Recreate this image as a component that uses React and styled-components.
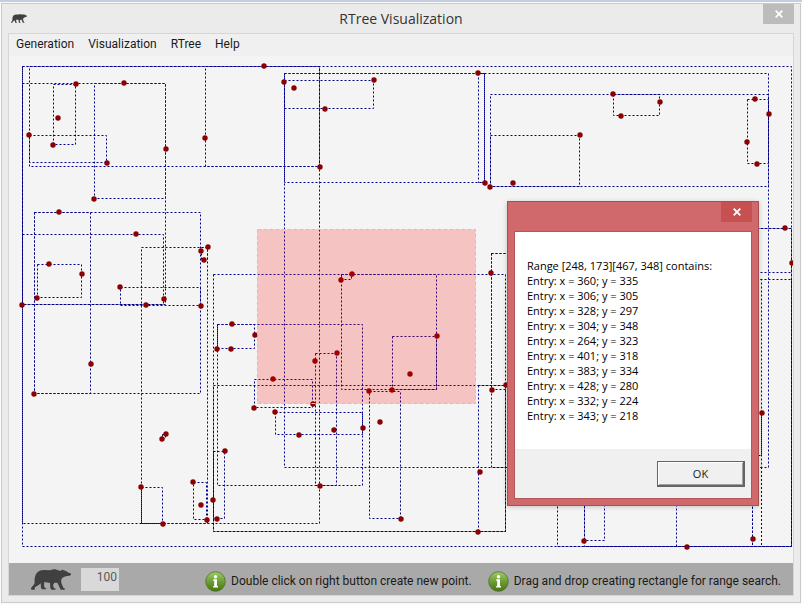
import React from 'react';
import styled, { createGlobalStyle } from 'styled-components';

const GlobalStyle = createGlobalStyle`
  *, *::before, *::after { box-sizing: border-box; }
  body {
    margin: 0;
    background: #f0f1f3;
    font-family: "Open Sans", "Noto Sans", sans-serif;
    font-size: 12px;
    color: #1a1a1a;
  }
  button, input { font: inherit; color: inherit; }
`;

const Desktop = styled.div`
  position: relative;
  padding: 1px 1px 2px;
  border-top: 2px solid #c5cde0;
  background: #fbfbfb;
`;

const Window = styled.section`
  display: flex;
  flex-direction: column;
  padding: 0 6px 6px;
  border: 1px solid #cacaca;
  background: #ebebeb;
`;

const TitleBar = styled.header`
  display: grid;
  grid-template-columns: 1fr auto 1fr;
  height: 29px;
  align-items: center;
`;

const TitleIcon = styled.span`
  display: flex;
  padding-left: 3px;
`;

const Title = styled.h1`
  margin: 0;
  font-size: 14px;
  font-weight: 400;
  line-height: 20px;
  color: #333;
`;

const CloseButton = styled.button`
  display: flex;
  align-items: center;
  justify-content: center;
  align-self: start;
  justify-self: end;
  width: 31px;
  height: 20px;
  padding: 0;
  border: 0;
  background: ${(p) => (p.$active ? '#c75050' : '#bcbcbc')};
`;

const Client = styled.main`
  border: 1px solid #d6d6d6;
  background: #f4f4f4;
`;

const MenuBar = styled.nav`
  display: flex;
  align-items: flex-start;
  gap: 14px;
  height: 22px;
  padding: 0 7px;
  background: #f0f0f0;
`;

const MenuItem = styled.button`
  padding: 0;
  border: 0;
  background: none;
  font-family: Roboto, sans-serif;
  font-size: 12px;
  line-height: 20px;
`;

const Canvas = styled.div`
  overflow: hidden;
  background: #f4f4f4;
`;

const Plot = styled.svg`
  display: block;
`;

const StatusBar = styled.footer`
  display: flex;
  align-items: center;
  justify-content: space-between;
  height: 32px;
  padding: 0 12px 0 22px;
  background: #a9a9a9;
`;

const StatusGroup = styled.div`
  display: flex;
  align-items: center;
  gap: ${(p) => p.$gap}px;
`;

const CountInput = styled.input`
  width: 38px;
  height: 23px;
  padding: 0 2px 4px;
  border: 0;
  background: #d9d9d9;
  color: #5a5a5a;
  font-family: Roboto, sans-serif;
  text-align: right;
`;

const Hint = styled.p`
  display: flex;
  align-items: center;
  gap: 5px;
  margin: 0;
  padding-top: 4px;
  font-family: Roboto, sans-serif;
  line-height: 20px;
  white-space: nowrap;
`;

const Dialog = styled.div`
  position: absolute;
  top: 199px;
  right: 43px;
  width: 252px;
  padding: 0 6px 6px;
  border: 1px solid #a94f52;
  background: #d0696b;
  box-shadow: 0 1px 5px rgba(0, 0, 0, 0.2);
`;

const DialogBar = styled.div`
  display: flex;
  justify-content: flex-end;
  height: 29px;
`;

const DialogFrame = styled.div`
  border: 1px solid #b3565a;
  background: #fff;
`;

const Message = styled.div`
  padding: 26px 12px;
  font-size: 11px;
  line-height: 15px;
  color: #000;
`;

const Line = styled.p`
  margin: 0;
  white-space: nowrap;
`;

const DialogActions = styled.div`
  display: flex;
  justify-content: flex-end;
  padding: 12px 6px 11px;
  background: #f0f0f0;
`;

const OkButton = styled.button`
  width: 88px;
  height: 26px;
  padding: 0;
  border: 1px solid #646464;
  border-right-width: 2px;
  border-bottom-width: 2px;
  background: #f0f0f0;
  box-shadow: inset 1px 1px #fff, inset -1px -1px #a0a0a0;
  font-size: 11px;
  line-height: 20px;
`;

const BearIcon = ({ width, height }) => (
  <svg width={width} height={height} viewBox="0 0 120 63" preserveAspectRatio="none" aria-hidden="true">
    <path
      fill="#404040"
      d="M14 17C18 8 27 3 39 3L58 4C64 1 71 0 77 2L89 6C91 2 96 1 98 4L105 6C109 9 114 12 119 13L120 17L116 20L104 22C100 25 95 25 92 29C90 34 90 39 92 44L97 56L102 59L101 62H89L87 58L79 41L70 41L66 49L69 57L74 59L73 62H61L58 58L57 42L40 39L39 51L42 57L46 58L45 61H33L30 57L29 43L23 48L12 55L11 62H1L0 57L10 45C12 35 9 27 14 17Z"
    />
  </svg>
);

const InfoIcon = () => (
  <svg width="21" height="21" viewBox="0 0 21 21" aria-hidden="true">
    <defs>
      <linearGradient id="infoFill" x1="0" y1="0" x2="0" y2="1">
        <stop offset="0" stopColor="#a3cc6a" />
        <stop offset="0.5" stopColor="#6d9e34" />
        <stop offset="1" stopColor="#477410" />
      </linearGradient>
    </defs>
    <circle cx="10.5" cy="10.5" r="9.8" fill="url(#infoFill)" stroke="#4a7420" strokeWidth="0.8" />
    <circle cx="10.5" cy="5.8" r="1.7" fill="#fff" />
    <path fill="#fff" d="M8.2 8.3H12V15H13V16.6H8.2V15H9.2V9.8H8.2Z" />
  </svg>
);

const Cross = () => (
  <svg width="8" height="8" viewBox="0 0 8 8" aria-hidden="true">
    <path d="M0.7 0.7L7.3 7.3M7.3 0.7L0.7 7.3" stroke="#fff" strokeWidth="1.8" />
  </svg>
);

/* Bounding boxes of the tree nodes: left, top, right, bottom. */
const boxes = [
  [22, 66, 791, 546],
  [22, 66, 319, 523], [29, 66, 319, 166], [205, 66, 319, 166], [29, 135, 106, 162], [53, 84, 75, 144],
  [22, 83, 165, 304], [94, 83, 165, 198], [22, 234, 163, 304],
  [34, 212, 200, 393], [34, 212, 90, 393], [37, 264, 81, 297], [120, 287, 200, 305],
  [141, 247, 207, 523], [201, 247, 207, 259], [162, 434, 165, 438], [141, 487, 162, 523], [193, 482, 206, 519],
  [284, 73, 768, 467], [284, 73, 484, 182], [284, 80, 373, 108], [478, 73, 484, 182],
  [490, 94, 768, 186], [490, 135, 579, 186], [613, 94, 659, 115], [747, 99, 768, 163],
  [491, 253, 740, 467], [491, 253, 520, 389],
  [213, 274, 505, 531], [213, 385, 505, 531], [478, 385, 505, 531], [213, 451, 224, 518], [369, 391, 400, 518],
  [217, 324, 362, 485], [217, 324, 254, 348], [254, 379, 312, 407], [315, 353, 336, 485], [275, 412, 362, 434],
  [341, 274, 436, 389], [341, 274, 351, 279], [392, 336, 436, 389],
  [557, 228, 791, 546], [740, 228, 791, 272], [584, 279, 791, 546], [584, 400, 604, 540],
  [676, 450, 752, 546], [740, 279, 761, 467], [700, 413, 761, 455],
];

/* Boxes whose lower edge lies on the outer frame. */
const dividers = [[752, 467, 546], [761, 467, 546]];

const points = [
  [264, 66], [124, 83], [76, 84], [58, 118], [29, 135], [53, 145], [107, 163], [166, 149], [205, 138], [94, 199],
  [320, 167], [284, 82], [294, 88], [374, 80], [325, 109], [478, 73], [485, 183], [490, 187], [513, 183], [580, 135],
  [613, 94], [660, 102], [621, 116], [755, 99], [769, 114], [747, 142], [757, 164], [785, 228], [792, 263],
  [59, 212], [136, 234], [49, 264], [82, 274], [37, 298], [22, 305], [146, 305], [164, 299], [120, 287],
  [201, 251], [208, 247], [204, 260], [201, 306], [91, 364], [34, 394], [232, 324], [255, 335], [217, 349],
  [231, 349], [352, 274], [341, 280], [437, 336], [337, 353], [315, 361], [410, 374], [273, 379], [369, 391],
  [392, 390], [313, 404], [254, 408], [275, 412], [363, 428], [334, 430], [299, 435], [380, 422], [225, 451],
  [320, 486], [401, 519], [478, 532], [480, 472], [492, 390], [506, 385], [491, 273], [166, 434], [162, 439],
  [141, 487], [163, 524], [193, 482], [201, 505], [207, 520], [213, 500], [217, 519], [584, 541], [687, 547],
  [753, 539], [762, 413],
];

const entries = [
  [360, 335], [306, 305], [328, 297], [304, 348], [264, 323],
  [401, 318], [383, 334], [428, 280], [332, 224], [343, 218],
];

const menus = ['Generation', 'Visualization', 'RTree', 'Help'];

export default function App() {
  return (
    <>
      <GlobalStyle />
      <Desktop>
        <Window>
          <TitleBar>
            <TitleIcon><BearIcon width={16} height={9} /></TitleIcon>
            <Title>RTree Visualization</Title>
            <CloseButton aria-label="Close window"><Cross /></CloseButton>
          </TitleBar>
          <Client>
            <MenuBar>
              {menus.map((name) => <MenuItem key={name}>{name}</MenuItem>)}
            </MenuBar>
            <Canvas>
              <Plot width="784" height="507" viewBox="9 56 784 507" role="img" aria-label="R-tree nodes and points">
                <g fill="none" stroke="#00008b" strokeDasharray="2 2">
                  {boxes.map(([l, t, r, b], i) => (
                    <path key={i} d={`M${l + 0.5} ${t + 0.5}H${r + 0.5}V${b + 0.5}H${l + 0.5}Z`} />
                  ))}
                  {dividers.map(([x, t, b]) => <path key={x} d={`M${x + 0.5} ${t}V${b}`} />)}
                </g>
                <g fill="#8b0000">
                  {points.map(([x, y], i) => <circle key={i} cx={x} cy={y} r="2.7" />)}
                </g>
                <rect x="257.5" y="229.5" width="218" height="174" fill="rgba(255,0,0,0.2)" stroke="#c4c4c4" strokeDasharray="4 2" />
              </Plot>
            </Canvas>
            <StatusBar>
              <StatusGroup $gap={10}>
                <BearIcon width={40} height={21} />
                <CountInput aria-label="Number of points" defaultValue="100" />
              </StatusGroup>
              <StatusGroup $gap={16}>
                <Hint><InfoIcon />Double click on right button create new point.</Hint>
                <Hint><InfoIcon />Drag and drop creating rectangle for range search.</Hint>
              </StatusGroup>
            </StatusBar>
          </Client>
        </Window>
        <Dialog role="dialog" aria-label="Range search result">
          <DialogBar>
            <CloseButton $active aria-label="Close dialog"><Cross /></CloseButton>
          </DialogBar>
          <DialogFrame>
            <Message>
              <Line>Range [248, 173][467, 348] contains:</Line>
              {entries.map(([x, y]) => <Line key={`${x}-${y}`}>{`Entry: x = ${x}; y = ${y}`}</Line>)}
            </Message>
            <DialogActions>
              <OkButton>OK</OkButton>
            </DialogActions>
          </DialogFrame>
        </Dialog>
      </Desktop>
    </>
  );
}
